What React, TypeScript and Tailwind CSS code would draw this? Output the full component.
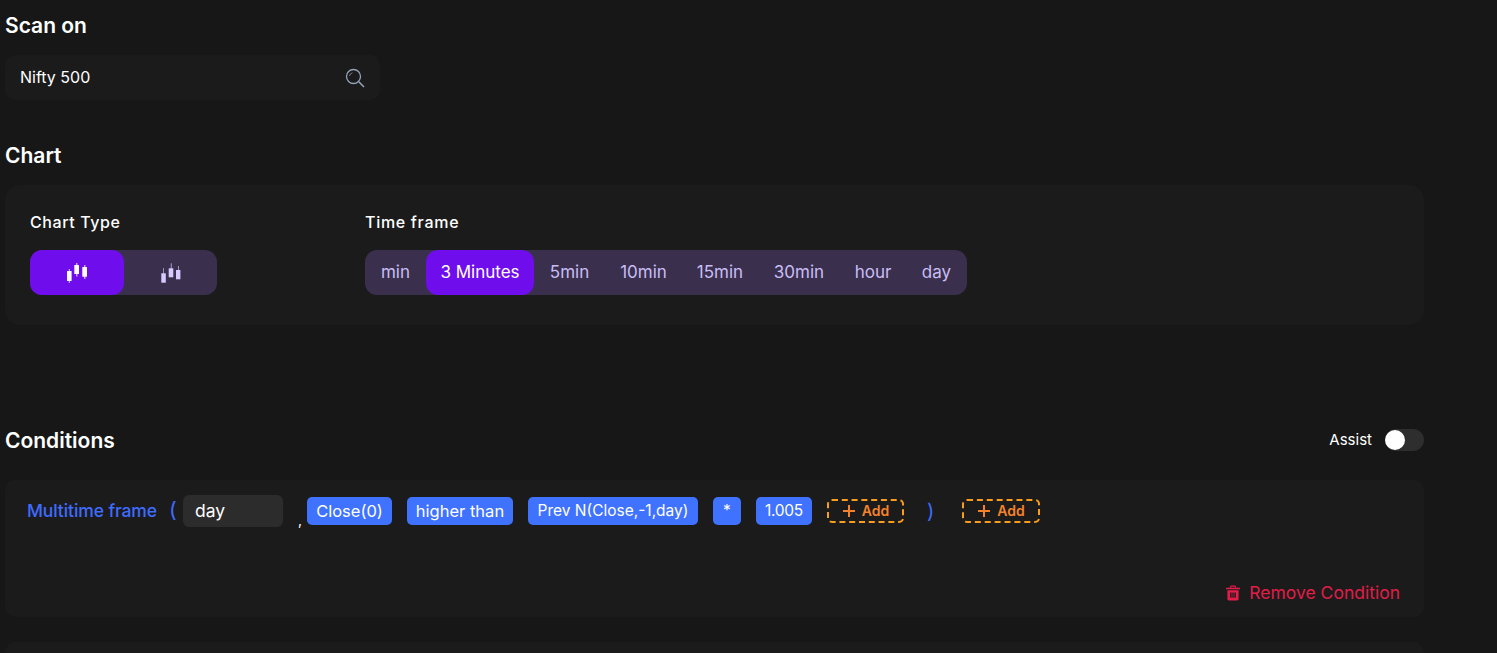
const frames = [
  { label: 'min', width: 'w-[61px]' },
  { label: '3 Minutes', width: 'w-[108px]', active: true },
  { label: '5min', width: 'w-[71px]' },
  { label: '10min', width: 'w-[77px]' },
  { label: '15min', width: 'w-[76px]' },
  { label: '30min', width: 'w-[82px]' },
  { label: 'hour', width: 'w-[66px]' },
  { label: 'day', width: 'w-[61px]' },
];

function CandlesSolid() {
  return (
    <svg width="20" height="20" viewBox="0 0 20 20" fill="#fff" className="mt-[1px]">
      <rect x="1.8" y="6" width="1" height="14" opacity="0.75" />
      <rect x="0" y="8" width="4.6" height="10" rx="0.5" />
      <rect x="9.2" y="0" width="1.2" height="13.5" opacity="0.75" />
      <rect x="7.3" y="2" width="4.7" height="9" rx="0.5" />
      <rect x="17.2" y="2" width="1.2" height="14" opacity="0.75" />
      <rect x="15.3" y="4" width="4.7" height="9.7" rx="0.5" />
    </svg>
  );
}

function CandlesOutline() {
  return (
    <svg width="20" height="20" viewBox="0 0 20 20" fill="#d9c9ff" className="mt-[1px]">
      <rect x="2" y="5" width="1" height="6" opacity="0.6" />
      <rect x="0.3" y="10.3" width="4.5" height="9.4" />
      <rect x="9.7" y="0.3" width="1.2" height="6" opacity="0.6" />
      <rect x="7.7" y="5.3" width="4.6" height="9" />
      <rect x="17" y="3" width="1" height="5" opacity="0.6" />
      <rect x="15" y="7" width="4.4" height="9.3" />
    </svg>
  );
}

function Chip({ children, className = '' }: { children: React.ReactNode; className?: string }) {
  return (
    <span className={`flex h-[28px] items-center justify-center rounded-[5px] bg-[#3f72ff] text-white ${className}`}>
      {children}
    </span>
  );
}

function AddButton({ className = '' }: { className?: string }) {
  return (
    <span className={`flex h-[24px] items-center justify-center gap-[6px] rounded-[5px] border-2 border-dashed border-[#f99d1c] pb-[1px] text-[14px] font-semibold text-[#f5822a] ${className}`}>
      <svg width="14" height="14" viewBox="0 0 14 14" fill="none" stroke="currentColor" strokeWidth="2">
        <path d="M7 1v12M1 7h12" />
      </svg>
      Add
    </span>
  );
}

export default function App() {
  return (
    <div className="h-[653px] w-[1497px] overflow-hidden bg-[#171717] pl-[5px] font-['Inter','Open_Sans',sans-serif] text-white">
      <div className="w-[1419px]">
        <h2 className="flex h-[50px] items-center pt-[2px] text-[21px] font-semibold">Scan on</h2>
        <div className="mt-[5px] flex h-[45px] w-[375px] items-center justify-between rounded-[10px] bg-[#1b1b1b] pl-[15px] pr-[15px] text-[16px]">
          <span className="pb-[1px]">Nifty 500</span>
          <svg width="20" height="20" viewBox="0 0 20 20" fill="none" stroke="#94a3b8" strokeWidth="1.3">
            <circle cx="8.5" cy="8.5" r="7" />
            <path d="M13.8 13.8 19 19" strokeWidth="1.6" />
            <path d="M4.5 8a4 4 0 0 1 3-3.2" strokeWidth="1" opacity="0.7" />
          </svg>
        </div>

        <h2 className="mt-[40px] flex h-[30px] items-center pt-[2px] text-[21px] font-semibold">Chart</h2>
        <section className="mt-[15px] flex h-[140px] rounded-[15px] bg-[#1b1b1b] pl-[25px]">
          <div className="w-[335px]">
            <h3 className="mt-[27px] h-[20px] text-[16px] leading-[20px] font-medium tracking-[0.6px]">Chart Type</h3>
            <div className="mt-[18px] flex h-[45px] w-[187px] rounded-[12px] bg-[#3a304d]">
              <div className="flex w-[94px] items-center justify-center rounded-[12px] bg-[#6f0ded]">
                <CandlesSolid />
              </div>
              <div className="flex flex-1 items-center justify-center">
                <CandlesOutline />
              </div>
            </div>
          </div>
          <div>
            <h3 className="mt-[27px] h-[20px] text-[16px] leading-[20px] font-medium tracking-[0.7px]">Time frame</h3>
            <div className="mt-[18px] flex h-[45px] rounded-[12px] bg-[#3a304d] text-[17px]">
              {frames.map((f) => (
                <span
                  key={f.label}
                  className={`flex items-center justify-center rounded-[12px] ${f.width} ${f.active ? 'bg-[#6f0ded] text-white' : 'text-[#c9bdf5]'}`}
                >
                  {f.label}
                </span>
              ))}
            </div>
          </div>
        </section>

        <div className="mt-[100px] flex h-[30px] items-center justify-between">
          <h2 className="pt-[2px] text-[21px] font-semibold">Conditions</h2>
          <div className="flex items-center gap-[13px] text-[15px]">
            <span>Assist</span>
            <span className="flex h-[22px] w-[39px] items-center rounded-full bg-[#2e2e2e]">
              <span className="size-[20px] rounded-full bg-white" />
            </span>
          </div>
        </div>

        <section className="mt-[25px] h-[137px] rounded-[10px] bg-[#1b1b1b] pl-[22px] pr-[24px] pt-[15px]">
          <div className="flex h-[32px] items-center text-[#3f6bff]">
            <span className="w-[142px] text-[17.5px] font-medium tracking-[-0.1px]">Multitime frame</span>
            <span className="w-[14px] pb-[2px] text-[21px]">(</span>
            <span className="flex h-[32px] w-[100px] items-center rounded-[6px] bg-[#2c2c2c] pl-[12px] text-[17.5px] text-white">day</span>
            <span className="ml-[15px] mt-[16px] w-[9px] text-[14px] text-white">,</span>
            <Chip className="w-[85px] text-[16.5px]">Close(0)</Chip>
            <Chip className="ml-[15px] w-[106px] text-[16.5px]">higher than</Chip>
            <Chip className="ml-[15px] w-[170px] text-[15.5px]">Prev N(Close,-1,day)</Chip>
            <Chip className="ml-[15px] w-[28px] text-[15.5px]">*</Chip>
            <Chip className="ml-[15px] w-[56px] text-[15.5px] tracking-[-0.3px]">1.005</Chip>
            <AddButton className="ml-[15px] w-[77px]" />
            <span className="ml-[23px] w-[35px] text-[20px]">)</span>
            <AddButton className="w-[78px]" />
          </div>
          <div className="mt-[53px] flex items-center justify-end gap-[9px] text-[17.5px] text-[#e11d48]">
            <svg width="14" height="16" viewBox="0 0 15 16" fill="currentColor">
              <path d="M5 0h5l1 2.5h4v1.5H0V2.5h4zM5.5 1.2 5.2 2.5h4.6l-.3-1.3z" fillRule="evenodd" />
              <path d="M1.5 5h12v9.5a1.5 1.5 0 0 1-1.5 1.5H3a1.5 1.5 0 0 1-1.5-1.5zM4.5 7.5V13H6V7.5zM6.8 7.5V13h1.4V7.5zM9 7.5V13h1.5V7.5z" fillRule="evenodd" />
            </svg>
            Remove Condition
          </div>
        </section>

        <section className="mt-[25px] h-[40px] rounded-[10px] bg-[#1b1b1b]" />
      </div>
    </div>
  );
}
